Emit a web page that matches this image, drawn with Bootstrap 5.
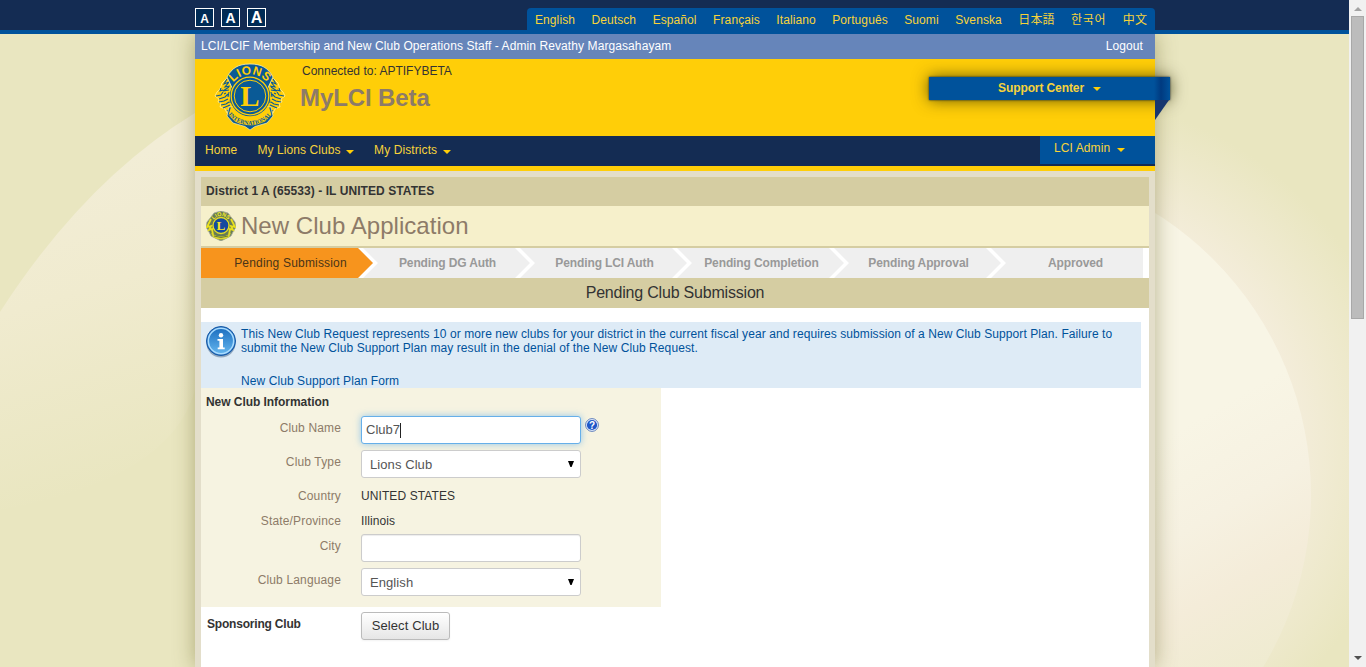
<!DOCTYPE html>
<html lang="en">
<head>
<meta charset="utf-8">
<meta name="viewport" content="width=device-width, initial-scale=1">
<title>MyLCI Beta - New Club Application</title>
<link href="https://cdn.jsdelivr.net/npm/bootstrap@5.3.0/dist/css/bootstrap.min.css" rel="stylesheet">
<style>
:root{--navy:#142c53;--blue:#00529b;--gold:#ffce08;--tan:#d5cda2}
body{font:12px/14px "Liberation Sans",Arial,sans-serif;color:#333;background:#e9e6c0;height:667px;overflow:hidden;letter-spacing:.09px}
a{text-decoration:none;color:inherit}
.backdrop{position:absolute;inset:0;z-index:-1}
.viewport{height:667px}
.topbar{height:34px;background:var(--navy);border-bottom:4px solid var(--blue)}
.shell{width:960px;margin-left:195px}
.sizes a{width:19px;height:19px;border:1px solid #fff;background:#002b55;color:#fff;font-weight:bold;line-height:14px;display:flex;justify-content:center;align-items:flex-end;letter-spacing:0}
.langs{height:26px;width:628px;background:var(--blue);color:#f7d33a;border-radius:4px 4px 0 0;padding:0 8px;margin-top:8px}
.langs a{line-height:24px;white-space:nowrap}
.page-col{height:633px;box-shadow:0 0 20px rgba(90,85,20,.42);clip-path:inset(0 -40px)}
.userbar{height:25px;background:#6685ba;color:#fff;padding:0 12px 2px 6px}
.brandbar{height:77px;background:var(--gold)}
.brandbar h1{font-size:24px;line-height:28px;font-weight:bold;color:#8d7b68;margin:6px 0 0 -2px;letter-spacing:-.1px}
.mainnav{height:30px;background:var(--navy);color:#f7d33a}
.mainnav .links{padding-left:10px;line-height:28px}
.tri{display:inline-block;border:4px solid transparent;border-top-color:#ffce08;border-bottom:0}
.admin{width:115px;height:28px;background:var(--blue);line-height:24px;padding-left:14px}
.support{right:-15px;top:18px;width:241px;height:23px;line-height:22px;font-weight:bold;color:#f7d33a;background:linear-gradient(90deg,var(--blue) 225px,#003a80 232px,#00529b);box-shadow:0 0 16px rgba(50,45,0,.75),0 0 2px #124;text-align:center;letter-spacing:-.1px}
.support::after{content:"";position:absolute;right:1px;top:23px;width:14px;height:20px;background:#17366f;clip-path:polygon(0 0,100% 0,0 100%)}
.support .tri{margin:0 0 1px 9px}
.sheet{border-top:5px solid var(--gold);background:#e3deca;padding:6px 6px 0;height:501px}
.sheet-body{background:#fff;height:490px}
.district{height:29px;background:var(--tan);padding:7px 5px;font-weight:bold;letter-spacing:.08px}
.title-row{height:42px;background:#f6f0cb;border-bottom:2px solid var(--tan);padding:0 5px}
.title-row h2{font-size:24px;line-height:28px;font-weight:normal;color:#8d7b68;margin:0 0 0 5px;letter-spacing:.04px}
.steps{height:30px}
.steps li{width:157px;height:30px;background:#efefef;color:#999;font-weight:bold;line-height:30px;text-align:center;padding-left:22px;position:relative;white-space:nowrap;letter-spacing:-.12px}
.steps li:not(:first-child)::before{content:"";position:absolute;left:0;top:0;width:20px;height:30px;background:#fff;clip-path:polygon(0 0,5px 0,20px 15px,5px 30px,0 30px,15px 15px)}
.steps .current{background:#f7941d;color:#4a3418;font-weight:normal;letter-spacing:.18px}
.steps .current::after{content:"";position:absolute;z-index:1;left:157px;top:0;width:15px;height:30px;background:#f7941d;clip-path:polygon(0 0,100% 50%,0 100%)}
.phase{height:30px;line-height:29px;background:var(--tan);font-size:16px;text-align:center;letter-spacing:-.2px}
.notice{width:940px;height:66px;margin-top:14px;background:#deebf6;color:#00529b;padding:5px 0 0 5px;gap:5px;letter-spacing:.08px}
.club-form{width:460px;height:219px;background:#f6f3e1}
.club-form h3,.sponsor h3{font-size:12px;font-weight:bold;line-height:14px;margin:0;letter-spacing:-.05px}
.sponsor h3{letter-spacing:-.2px}
.club-form h3{padding:7px 5px;height:28px}
.f-row{display:flex;align-items:flex-start}
.f-row>label{width:140px;margin-right:20px;text-align:right;color:#8d7b68;padding-top:5px;letter-spacing:.15px}
.f-row .form-control,.f-row .form-select{width:220px;height:28px;border:1px solid #ccc;border-radius:3px;font-size:13px;line-height:18px;color:#555;padding:5px 8px 3px;letter-spacing:.08px}
.f-row .form-control{padding:4px;letter-spacing:0;box-shadow:inset 0 1px 1px rgba(0,0,0,.075)}
.f-row .form-select{background:#fff url("data:image/svg+xml,%3Csvg xmlns='http://www.w3.org/2000/svg' width='6' height='6'%3E%3Cpath d='M0 0h6L3.6 6H2.4z'/%3E%3C/svg%3E") no-repeat right 6px top 10px/6px 6px}
.f-row .typing{border-color:#66afe9;box-shadow:0 0 7px rgba(82,168,236,.6);background:#fff;display:flex;align-items:center}
.caret{width:1px;height:15px;background:#222}
.sponsor .btn{width:89px;height:28px;border:1px solid #bbb;border-radius:3px;background:linear-gradient(#fff,#e6e6e6);font-size:13px;line-height:18px;padding:3px 0;color:#333;box-shadow:0 1px 2px rgba(0,0,0,.05);letter-spacing:.1px}
.sbar{width:17px;height:667px;background:#f1f1f1}
.thumb{width:13px;height:303px;background:#bcbcbc;border:1px solid #a8a8a8;margin-top:5px}
</style>
</head>
<body>
<svg class="backdrop" width="1349" height="667" viewBox="0 0 1349 667">
  <defs>
    <linearGradient id="lf" x1="0" y1="0" x2=".15" y2="1"><stop offset=".2" stop-color="#f2edd6"/><stop offset=".5" stop-color="#f0ebcf"/><stop offset="1" stop-color="#e9e6c0"/></linearGradient>
    <radialGradient id="rt" gradientUnits="userSpaceOnUse" cx="1060" cy="440" r="350"><stop offset=".45" stop-color="#f6efdf"/><stop offset=".66" stop-color="#f4eddb"/><stop offset=".98" stop-color="#e9e6c0"/></radialGradient>
    <linearGradient id="bl" gradientUnits="userSpaceOnUse" x1="1160" y1="440" x2="1290" y2="667"><stop offset="0" stop-color="#f8f5e5"/><stop offset=".35" stop-color="#f6f1e1"/><stop offset=".62" stop-color="#f4ecd9"/><stop offset="1" stop-color="#eeebcf"/></linearGradient>
  </defs>
  <path d="M0 312Q85 180 195 113V390Q170 480 0 510z" fill="url(#lf)"/>
  <path d="M1155 34H1349V667H1155z" fill="url(#rt)"/>
  <circle cx="978" cy="495" r="333" fill="url(#bl)"/>
</svg>
<div class="d-flex viewport">
<div class="flex-grow-1">
  <header class="topbar">
    <div class="shell d-flex justify-content-between">
      <div class="sizes d-flex mt-2" style="gap:7px"><a href="#" style="font-size:12px">A</a><a href="#" style="font-size:14px;line-height:15px">A</a><a href="#" style="font-size:16px;line-height:16px">A</a></div>
      <nav class="langs d-flex justify-content-between"><a href="#">English</a><a href="#">Deutsch</a><a href="#">Español</a><a href="#">Français</a><a href="#">Italiano</a><a href="#">Português</a><a href="#">Suomi</a><a href="#">Svenska</a><a href="#" lang="ja" style="font-family:'Liberation Sans','Noto Sans CJK JP',sans-serif">日本語</a><a href="#" lang="ko" style="font-family:'Liberation Sans','Noto Sans CJK KR',sans-serif;letter-spacing:.7px">한국어</a><a href="#" lang="zh" style="font-family:'Liberation Sans','Noto Sans CJK SC',sans-serif">中文</a></nav>
    </div>
  </header>
  <div class="shell page-col">
    <div class="userbar d-flex justify-content-between align-items-center"><span>LCI/LCIF Membership and New Club Operations Staff - Admin Revathy Margasahayam</span><a href="#">Logout</a></div>
    <div class="brandbar position-relative d-flex">
      <svg width="72" height="68" viewBox="0 0 72 68" style="margin:4px 15px 0 19px">
        <defs>
          <path id="arcTop" d="M14.800 32.500A21.200 21.200 0 0 1 57.200 32.500"/><path id="arcBot" d="M9.500 43A28 28 0 0 0 62.500 43"/>
          <g id="lion"><path d="M20 11L12 16L8 20L6 26L3 29L1 33L5 36L4 39L7 40L6 44L11 46L13 50L22 52V12z" fill="#ffce08" stroke="#fff3b0" stroke-width=".7"/><path d="M13 16l-3 5 5-2M16 18l-5 6 5-1M15 24l-6 4 6-1M7 25l-1 3 3-1M2 33l5-1 2-3M5 36l6-2 3-3M10 31l2-1M5 39l5-1 4-2M7 42l5-1 3-2M9 45l7-3M13 48l5-3M15 50l5-3M15 29l-1 5M17 32l-1 8" fill="none" stroke="#0a5a96" stroke-width="1.100"/></g>
        </defs>
        <use href="#lion"/><use href="#lion" transform="matrix(-1 0 0 1 72 0)"/>
        <path d="M36 1C24 1 18 5 13 14L20 29H52L59 14C54 5 48 1 36 1z" fill="#0a5a96" stroke="#f3efb0" stroke-width=".8"/>
        <path d="M15 44L13 53L19 60L31 63.500L36 67L41 63.500L53 60L59 53L57 44Z" fill="#0a5a96" stroke="#f3efb0" stroke-width=".7"/>
        <path d="M17 44L14.500 52L21 58.500Q36 66 51 58.500L57.500 52L55 44z" fill="#ffce08"/>
        <circle cx="36" cy="33" r="20.200" fill="#0a5a96"/>
        <circle cx="36" cy="33" r="18.800" fill="#0a5a96" stroke="#ffce08" stroke-width="1.300"/>
        <circle cx="36" cy="33" r="15.800" fill="none" stroke="#ffce08" stroke-width="1"/>
        <text font-family="Liberation Sans" font-weight="bold" font-size="12" fill="#ffce08" letter-spacing=".3"><textPath href="#arcTop" startOffset="50%" text-anchor="middle">LIONS</textPath></text>
        <text x="36" y="43" text-anchor="middle" font-family="Liberation Serif" font-weight="bold" font-size="29" letter-spacing="0" fill="#ffce08">L</text>
        <text font-family="Liberation Serif" font-weight="bold" font-size="6" fill="#0a5a96" letter-spacing="-.1"><textPath href="#arcBot" startOffset="50%" text-anchor="middle">INTERNATIONAL</textPath></text>
      </svg>
      <div style="padding:5px 0 0 1px"><div style="letter-spacing:0">Connected to: APTIFYBETA</div><h1>MyLCI Beta</h1></div>
      <a href="#" class="support position-absolute">Support Center<i class="tri"></i></a>
    </div>
    <nav class="mainnav d-flex justify-content-between">
      <div class="links d-flex"><a href="#">Home</a><a href="#" style="margin-left:20px">My Lions Clubs <i class="tri" style="margin-left:2px"></i></a><a href="#" style="margin-left:20px">My Districts <i class="tri" style="margin-left:2px"></i></a></div>
      <a href="#" class="admin">LCI Admin <i class="tri" style="margin-left:3px"></i></a>
    </nav>
    <main class="sheet"><div class="sheet-body">
      <div class="district">District 1 A (65533) - IL UNITED STATES</div>
      <div class="title-row d-flex align-items-center">
        <svg width="30" height="30" viewBox="0 0 30 30"><path d="M15 0L22 2 25 6 29 11 30 16 27 21 25 25 19 28 15 30 11 28 5 25 3 21 0 16 1 11 5 6 8 2z" fill="#687c55" stroke="#a5a99a" stroke-width=".8"/><path d="M5 8L1 16l4-1-2 4 3-1 1 6M25 8l4 8-4-1 2 4-3-1-1 6" fill="none" stroke="#e8df20" stroke-width="1.800"/><path id="smallArc" d="M5 12Q15 -2 25 12" fill="none"/><path d="M5 22Q15 29 25 22L23 26Q15 31 7 26z" fill="#d9d52d"/><path d="M8 25q7 3 14 0" fill="none" stroke="#6b7b35"/><circle cx="15" cy="14.500" r="8" fill="#1549a0" stroke="#e8df20" stroke-width="1.300"/><text font-family="Liberation Sans" font-weight="bold" font-size="5.500" fill="#f5eb28"><textPath href="#smallArc" startOffset="50%" text-anchor="middle">LIONS</textPath></text><text x="15" y="19" text-anchor="middle" font-family="Liberation Serif" font-weight="bold" font-size="13" fill="#f5e428">L</text></svg>
        <h2>New Club Application</h2>
      </div>
      <ul class="steps list-unstyled d-flex m-0"><li class="current">Pending Submission</li><li>Pending DG Auth</li><li>Pending LCI Auth</li><li>Pending Completion</li><li>Pending Approval</li><li>Approved</li></ul>
      <div class="phase">Pending Club Submission</div>
      <div class="notice d-flex">
        <svg class="flex-shrink-0" width="30" height="32" viewBox="0 0 30 32" style="margin-top:-1px"><defs><linearGradient id="ig" x2="0" y2="1"><stop stop-color="#1d6fc0"/><stop offset="1" stop-color="#63b5ee"/></linearGradient></defs><ellipse cx="15" cy="17.500" rx="14.500" ry="14" fill="#637f9c" opacity=".6"/><circle cx="15" cy="15" r="14.500" fill="#2369b7" stroke="#155aa8"/><circle cx="15" cy="15" r="12.700" fill="url(#ig)" stroke="#a9dcff" stroke-width="1.600"/><circle cx="15" cy="9.200" r="2.200" fill="#fff"/><path d="M11.500 13H17v8.500h1.700v1.700h-7v-1.700h1.700v-6.800h-1.900z" fill="#fff"/></svg>
        <div><div>This New Club Request represents 10 or more new clubs for your district in the current fiscal year and requires submission of a New Club Support Plan. Failure to<br>submit the New Club Support Plan may result in the denial of the New Club Request.</div><a href="#" class="d-block" style="margin-top:19px">New Club Support Plan Form</a></div>
      </div>
      <form class="club-form">
        <h3>New Club Information</h3>
        <div class="f-row" style="height:34px"><label>Club Name</label><div class="form-control typing"><span>Club7</span><span class="caret"></span></div>
          <svg width="14" height="14" viewBox="0 0 14 14" style="margin:2px 0 0 4px"><circle cx="7" cy="7" r="6.400" fill="#e8f1ff" stroke="#5274b4" stroke-width=".9"/><circle cx="7" cy="7" r="5.100" fill="#1f58c8"/><text x="7" y="10.500" text-anchor="middle" font-size="10" font-weight="bold" font-family="Liberation Sans" fill="#fff" letter-spacing="0">?</text></svg></div>
        <div class="f-row" style="height:34px"><label for="type">Club Type</label><select id="type" class="form-select"><option>Lions Club</option></select></div>
        <div class="f-row" style="height:25px"><label>Country</label><span style="padding-top:5px">UNITED STATES</span></div>
        <div class="f-row" style="height:25px"><label>State/Province</label><span style="padding-top:5px">Illinois</span></div>
        <div class="f-row" style="height:34px"><label for="city">City</label><input id="city" type="text" class="form-control"></div>
        <div class="f-row"><label for="lang">Club Language</label><select id="lang" class="form-select"><option>English</option></select></div>
      </form>
      <div class="sponsor d-flex" style="padding:5px 0 0 6px"><h3 style="width:154px;padding-top:5px">Sponsoring Club</h3><button type="button" class="btn">Select Club</button></div>
    </div></main>
  </div>
</div>
<div class="sbar d-flex flex-column align-items-center" aria-hidden="true">
  <svg width="8" height="4" style="margin-top:7px"><path d="M0 4L4 0l4 4z" fill="#a3a3a3"/></svg><div class="thumb"></div><svg class="mt-auto" width="8" height="4" style="margin-bottom:7px"><path d="M0 0h8L4 4z" fill="#505050"/></svg>
</div>
</div>
<script src="https://cdn.jsdelivr.net/npm/bootstrap@5.3.0/dist/js/bootstrap.bundle.min.js"></script>
</body>
</html>
